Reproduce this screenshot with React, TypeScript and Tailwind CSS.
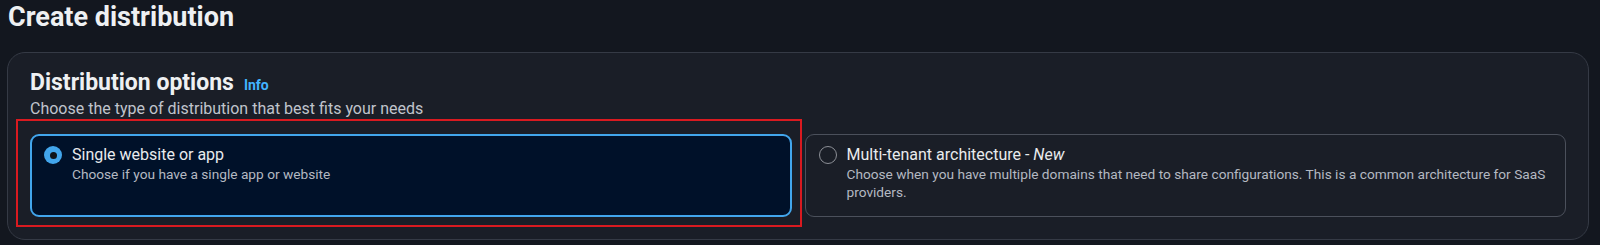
type TileProps = {
  selected?: boolean;
  title: React.ReactNode;
  children: React.ReactNode;
};

function Tile({ selected, title, children }: TileProps) {
  return (
    <div
      className={
        selected
          ? "relative flex h-[83px] gap-[10px] rounded-[9px] border-2 border-[#42a6ec] bg-[#001129] pl-[12px] pr-4 pt-[9px]"
          : "relative flex h-[83px] gap-[10px] rounded-[9px] border border-[#4b505b] bg-[#1a1e27] pl-[13px] pr-4 pt-[10px]"
      }
    >
      <div className="flex h-5 shrink-0 items-center">
        {selected ? (
          <span className="flex h-[18px] w-[18px] items-center justify-center rounded-full bg-[#42a6ec]">
            <span className="h-[7px] w-[7px] rounded-full bg-[#0f141a]" />
          </span>
        ) : (
          <span className="h-[18px] w-[18px] rounded-full border-[1.5px] border-[#8c8f96]" />
        )}
      </div>
      <div>
        <div className="text-[16px] leading-5 text-[#e9ebed]">{title}</div>
        <div className="text-[13.7px] leading-[18px] text-[#b4b9c2]">{children}</div>
      </div>
      {/* red annotation frame around the chosen option */}
      {selected && (
        <div className="pointer-events-none absolute -top-[17px] -right-[12px] -bottom-[12px] -left-[16px] border-2 border-[#d91a20]" />
      )}
    </div>
  );
}

export default function App() {
  return (
    <div className="h-[245px] w-full overflow-hidden bg-[#13171f] font-['Roboto',sans-serif]">
      <h1 className="pl-2 pt-px text-[27px] font-bold leading-8 text-[#eef0f2]">Create distribution</h1>

      <section className="mt-[19px] ml-[7px] mr-[11px] h-[188px] rounded-[18px] border border-[#353a45] bg-[#1a1e27] px-[22px] pt-4">
        <div className="flex items-baseline gap-[10px]">
          <h2 className="text-[23px] font-bold leading-7 text-[#eef0f2]">Distribution options</h2>
          <a className="text-[14px] font-bold text-[#42b4ff]">Info</a>
        </div>
        <p className="mt-[2px] text-[16px] leading-5 text-[#c0c4cc]">
          Choose the type of distribution that best fits your needs
        </p>

        <div className="mt-[15px] grid grid-cols-2 gap-[13px]">
          <Tile selected title="Single website or app">
            Choose if you have a single app or website
          </Tile>
          <Tile
            title={
              <>
                Multi-tenant architecture - <i>New</i>
              </>
            }
          >
            Choose when you have multiple domains that need to share configurations. This is a common architecture for
            SaaS
            <br />
            providers.
          </Tile>
        </div>
      </section>
    </div>
  );
}
